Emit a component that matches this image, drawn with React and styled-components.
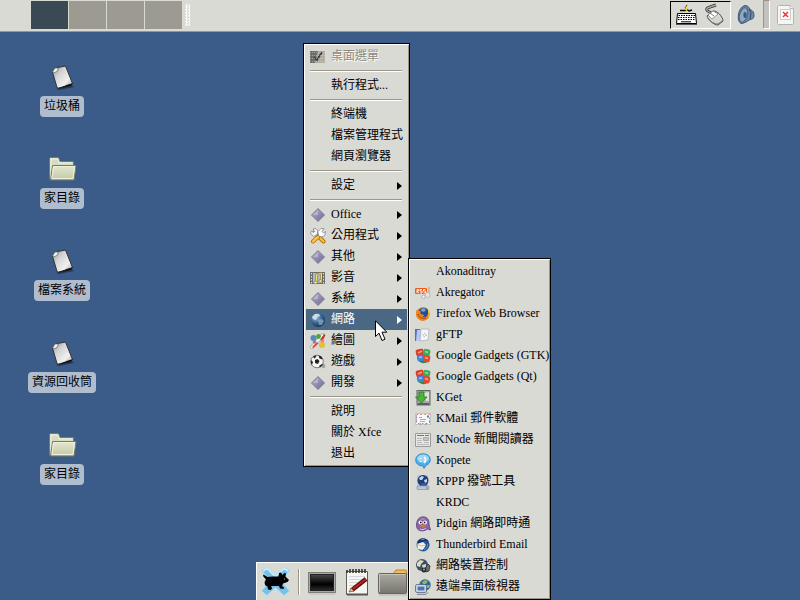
import React from "react";
import styled, { createGlobalStyle } from "styled-components";

const GlobalStyle = createGlobalStyle`
  * {
    box-sizing: border-box;
  }

  body {
    margin: 0;
    font-family: "Liberation Serif", "Noto Sans CJK TC", serif;
    font-size: 12px;
    color: #000000;
  }

  button {
    border: none;
    margin: 0;
    padding: 0;
    background: none;
    font: inherit;
    color: inherit;
  }

  ul {
    list-style: none;
    margin: 0;
    padding: 0;
  }
`;

/* Gradients used by more than one icon */

const Gradients = () => (
  <HiddenSvg width="0" height="0" aria-hidden="true">
    <defs>
      <linearGradient id="paper" x1="0" y1="0" x2="1" y2="1">
        <stop offset="0" stopColor="#8c8c8c" />
        <stop offset="0.35" stopColor="#d4d4d4" />
        <stop offset="0.7" stopColor="#f0f0f0" />
        <stop offset="1" stopColor="#a0a0a0" />
      </linearGradient>
      <linearGradient id="folder" x1="0" y1="0" x2="0" y2="1">
        <stop offset="0" stopColor="#e4e8d2" />
        <stop offset="1" stopColor="#c3c9a4" />
      </linearGradient>
      <linearGradient id="diamond" x1="0" y1="0" x2="1" y2="1">
        <stop offset="0" stopColor="#b9b4cc" />
        <stop offset="1" stopColor="#6b6690" />
      </linearGradient>
      <linearGradient id="screen" x1="0" y1="0" x2="0" y2="1">
        <stop offset="0" stopColor="#4a4a4a" />
        <stop offset="0.6" stopColor="#000000" />
        <stop offset="1" stopColor="#2c2c2c" />
      </linearGradient>
      <linearGradient id="greyFolder" x1="0" y1="0" x2="0" y2="1">
        <stop offset="0" stopColor="#aaa9a2" />
        <stop offset="1" stopColor="#77756e" />
      </linearGradient>
      <radialGradient id="globe" cx="0.35" cy="0.3" r="0.8">
        <stop offset="0" stopColor="#a9c8e2" />
        <stop offset="0.5" stopColor="#386794" />
        <stop offset="1" stopColor="#122848" />
      </radialGradient>
    </defs>
  </HiddenSvg>
);

/* Desktop icons */

const PaperIcon = () => (
  <svg width="32" height="32" viewBox="0 0 32 32">
    <path d="M10 29l16-4 2 2-15 3z" fill="#1c2b40" opacity="0.7" />
    <path
      d="M6.500 12l2.500-4 10.500-2 7 17.500-2 1.500-12 3-1.500-.5z"
      fill="url(#paper)"
      stroke="#333333"
    />
    <path d="M6.500 12l2.500-4 3.500 0-1.500 3.500-2.500 1z" fill="#f4f4f4" stroke="#666666" strokeWidth="0.7" />
    <path d="M11 29l14-3 2-3-5 1.500z" fill="#151515" />
  </svg>
);

const FolderIcon = () => (
  <svg width="32" height="32" viewBox="0 0 32 32">
    <path
      d="M3.500 27V6.500l1-1h8l1.500 4h13.500v17z"
      fill="#d7dbbf"
      stroke="#777c62"
    />
    <path d="M5 25V7h7l1 4h13" fill="none" stroke="#f0f2e3" />
    <path
      d="M6.500 13.500h23.500l-2 14.500H4.500z"
      fill="url(#folder)"
      stroke="#777c62"
    />
    <path d="M7.500 14.500h21l-1.500 12H6z" fill="none" stroke="#edf0df" />
  </svg>
);

/* Menu icons */

const Glyph = ({ children }) => (
  <svg width="16" height="16" viewBox="0 0 16 16" aria-hidden="true">
    {children}
  </svg>
);

const DeskIcon = () => (
  <Glyph>
    <rect x="0" y="2" width="15" height="12" fill="#b0ada0" />
    <path d="M0 2h8l-3 12H0z" fill="#6a6d6e" />
    <path d="M4 8l3 3 5-8" stroke="#3c3e40" strokeWidth="1.800" fill="none" />
    <path
      d="M0 3.500h15M0 6.500h15M0 9.500h15M0 12.500h15"
      stroke="#dadad5"
      strokeDasharray="1 1"
      opacity="0.5"
    />
  </Glyph>
);

const DiamondIcon = () => (
  <Glyph>
    <path d="M8 1.500L14.500 8 8 14.500 1.500 8z" fill="url(#diamond)" stroke="#7f7b9a" />
    <path d="M8 3L3 8h5z" fill="#cbc7da" opacity="0.6" />
  </Glyph>
);

const ToolsIcon = () => (
  <Glyph>
    <path d="M4 4l9 9" stroke="#8a8a86" strokeWidth="3" strokeLinecap="round" />
    <path
      d="M0.500 5l1-2 2 1.500 1-1-1.500-2.500 3-.5 2 2.500-1 4-3.500 1.500z"
      fill="#f4f4f4"
      stroke="#777777"
      strokeWidth="0.7"
    />
    <path d="M9.500 9.500l4 4" stroke="#b06d06" strokeWidth="4" strokeLinecap="round" />
    <path d="M9.500 9.500l4 4" stroke="#f8be3c" strokeWidth="2.400" strokeLinecap="round" />
    <path d="M8 9L3 13.500" stroke="#b06d06" strokeWidth="4" strokeLinecap="round" />
    <path d="M8 9L3 13.500" stroke="#ffc440" strokeWidth="2.400" strokeLinecap="round" />
    <path
      d="M8.500 8l-.5-4.500 3-3h3l-2 3 1.500 1.500 2-1.500-.5 3.500-3 2z"
      fill="#ffffff"
      stroke="#777777"
      strokeWidth="0.7"
    />
  </Glyph>
);

const MediaIcon = () => (
  <Glyph>
    <rect x="0" y="2" width="15" height="12" fill="#6b7072" />
    <rect x="3" y="3" width="9" height="10" fill="#a9bdc6" />
    <path d="M1.500 3v11M13.500 3v11" stroke="#dcdcd8" strokeDasharray="1.500 1.500" />
    <path d="M6.500 12V4.500l5-1.500v8" fill="none" stroke="#80631c" strokeWidth="1.800" />
    <path d="M6.500 12V4.500l5-1.500v8" fill="none" stroke="#f9dc78" strokeWidth="1" />
    <ellipse cx="5.500" cy="12.500" rx="1.700" ry="1.500" fill="#f9dc78" stroke="#80631c" strokeWidth="0.5" />
    <ellipse cx="10.500" cy="11" rx="1.700" ry="1.500" fill="#f9dc78" stroke="#80631c" strokeWidth="0.5" />
  </Glyph>
);

const GlobeIcon = () => (
  <Glyph>
    <circle cx="8" cy="8" r="7" fill="url(#globe)" />
    <path d="M2 5l3-3 4 0 1 2-3 1-1 3-3-1z" fill="#d2e3ee" opacity="0.9" />
    <path d="M8 8l4-1 2 2-2 4-3 0z" fill="#9cbfd8" opacity="0.6" />
  </Glyph>
);

const PaintIcon = () => (
  <Glyph>
    <path d="M2 14L13 2" stroke="#a8adb0" strokeWidth="4" strokeLinecap="round" />
    <path d="M2 14L13 2" stroke="#eef1f2" strokeWidth="2.500" strokeLinecap="round" />
    <circle cx="3.500" cy="5" r="3" fill="#5a86bd" />
    <circle cx="8.500" cy="3.500" r="2.400" fill="#4aa63a" />
    <path d="M10 7l4-6 1.500 1-3 6z" fill="#cc2c23" />
    <circle cx="12" cy="12" r="3" fill="#e8bd38" />
    <circle cx="12.500" cy="8" r="1.800" fill="#e38a63" />
    <circle cx="4.500" cy="9" r="1.800" fill="#9d76ae" />
    <path d="M2 14l5-5 1.500 1.500-5 4.500z" fill="#db4a33" />
  </Glyph>
);

const BallIcon = () => (
  <Glyph>
    <path d="M10 9l4.500 1 1 3-3 1.500z" fill="#a0a09a" />
    <circle cx="7" cy="7.500" r="6.300" fill="#f5f5f5" stroke="#777777" />
    <path d="M5 6l2.500-1 2 2-1.500 3-3-1zM1 6l2 2-1 3-1-2zM8.500 1.500l3 1 1 3-3-1zM9 12l3-2 1 .500-3 3zM3 3l2-1.500 1.500 1-2 2z" fill="#222222" />
  </Glyph>
);

const RssIcon = () => (
  <Glyph>
    <rect x="0" y="3" width="12" height="6" rx="1" fill="#f05b16" />
    <path
      d="M2 8V4.500h1.500v1.500L2 6.500l2 1.500M7 4.500H5v1.500h2V8H5M10.500 4.500h-2v1.500h2V8h-2"
      stroke="#ffffff"
      strokeWidth="0.9"
      fill="none"
    />
    <path d="M14 2v5M14 7l-6 5" stroke="#f4a07a" strokeWidth="1.500" />
    <circle cx="12.500" cy="10" r="2.500" fill="#e5e5e5" stroke="#b9b9b9" />
    <circle cx="8.500" cy="12" r="1.800" fill="#efefef" stroke="#b5b5b5" />
  </Glyph>
);

const FirefoxIcon = () => (
  <Glyph>
    <circle cx="8" cy="8" r="6.800" fill="#e8741a" />
    <circle cx="8.500" cy="6.500" r="4.800" fill="#234f92" />
    <path d="M6 3l3-1 2 2-2 2-3-1z" fill="#6fa7d8" />
    <path
      d="M1.500 4l2 1 2 0 0 3 4 1-2 2 4 0 3-4c0 5-4 8-8 7.500C2 14 0 9 1.500 4z"
      fill="#ec8620"
    />
    <path d="M13 3c2 2 2 6 0 9 .5-3 .5-6 0-9z" fill="#f8cb3c" />
    <path d="M3 8c1 4 5 5 8 4" stroke="#a82e12" fill="none" />
  </Glyph>
);

const FtpIcon = () => (
  <Glyph>
    <path d="M0 2h5v12H0z" fill="#4e70bd" />
    <path d="M2 3h4v11H1z" fill="#b9c9ee" />
    <path d="M6 2h8l-1 11-8 1z" fill="#f5f5f8" stroke="#a7a7b4" strokeWidth="0.7" />
    <circle cx="9.500" cy="8" r="1.500" fill="none" stroke="#8b94b5" strokeDasharray="1 1" />
  </Glyph>
);

const GadgetsIcon = () => (
  <Glyph>
    <path d="M3 12c2 4 8 4 11 1l-1-4H4z" fill="#2f8c46" />
    <path d="M4 4h8v8H4z" fill="#8a5a4c" />
    <rect x="1" y="1" width="8" height="7" rx="2" fill="#dc3d2b" transform="rotate(-12 5 5)" />
    <rect x="8" y="1" width="7" height="7" rx="2" fill="#38ab55" transform="rotate(14 11 5)" />
    <rect x="2" y="7" width="7" height="6" rx="2" fill="#4385dc" transform="rotate(-8 5 10)" />
    <rect x="8" y="7" width="7" height="7" rx="2" fill="#e34731" transform="rotate(12 11 11)" />
    <path d="M3 5l4-2M10 3.500l3 1M4 9.500l3-.5M10 9.500l3 1" stroke="#ffffff" strokeWidth="1.400" opacity="0.5" />
  </Glyph>
);

const KGetIcon = () => (
  <Glyph>
    <rect x="2" y="0.5" width="13" height="14.500" fill="#a6aaa8" stroke="#646866" />
    <path d="M8 3l6-1v9h-3z" fill="#dddfdd" />
    <rect x="3" y="13" width="11" height="2" fill="#5c605e" />
    <path d="M4 2h5v5h3l-5.500 6L.5 7H4z" fill="#4bb536" stroke="#257c1b" strokeWidth="0.8" />
  </Glyph>
);

const MailIcon = () => (
  <Glyph>
    <rect x="0.5" y="2.500" width="15" height="11" fill="#f6f6f4" stroke="#c4c4c4" />
    <rect
      x="1.500"
      y="3.500"
      width="13"
      height="9"
      fill="none"
      stroke="#e07a70"
      strokeDasharray="1.500 2.500"
    />
    <path d="M12 4.500h2v2h-2z" fill="#587bbf" />
    <path d="M4 6.500h3M5 8.500h6M5 10.500h5" stroke="#999999" strokeWidth="0.8" />
    <path d="M1 5h1M1 9h1M14 10h1M5 13h1M10 13h1" stroke="#4267a5" />
  </Glyph>
);

const NewsIcon = () => (
  <Glyph>
    <path d="M.5 1.500h15v13H.5z" fill="#e7e7e5" stroke="#9b9b9b" />
    <path d="M2 3.500h7M10 3.500h4" stroke="#777777" />
    <path d="M2 6.500h5M2 8.500h5M2 10.500h5M2 12.500h12M9 10.500h5" stroke="#bbbbbb" />
    <path d="M8.500 5.500h5v3h-5z" fill="#c7c7c7" stroke="#aaaaaa" />
  </Glyph>
);

const KopeteIcon = () => (
  <Glyph>
    <path
      d="M8 .8c4.500 0 7.300 2.500 7.300 6 0 2.500-1.500 4.500-4 5.400L9 15.500 8 13C3.500 13 .7 10.500.7 7S3.500.8 8 .8z"
      fill="#4baee8"
      stroke="#2880c3"
      strokeWidth="0.8"
    />
    <ellipse cx="8" cy="5.500" rx="6" ry="4" fill="#9bd8f7" />
    <path d="M5.500 5v1M5.500 8v1M9 4c2 1 2 4 0 6" stroke="#ffffff" strokeWidth="1.600" fill="none" />
  </Glyph>
);

const PppIcon = () => (
  <Glyph>
    <path d="M2 1h11v11H2z" fill="#bcc8d8" />
    <circle cx="8" cy="6.500" r="5.500" fill="#213e79" />
    <path d="M4 4l3-2 2 1-2 3-2 0zM9 6l3-1 0 3-2 1z" fill="#c6d8ea" />
    <path d="M7 9h3l3 4H4z" fill="#35588f" />
    <rect x="2" y="12" width="12" height="3.500" rx="1" fill="#b8c5d7" stroke="#7890af" strokeWidth="0.7" />
    <path d="M11 14h2" stroke="#d85560" />
  </Glyph>
);

const PidginIcon = () => (
  <Glyph>
    <path
      d="M8 .8c4 0 6 2.800 6 6 0 3 1 5 1.500 7.200l-3-1c-3 2.500-8 2.500-10 0C.5 10.500 1 .8 8 .8z"
      fill="#8a64a6"
      stroke="#51346d"
      strokeWidth="0.7"
    />
    <path d="M4 3l4-1 3 1-3 1z" fill="#ae8bc4" />
    <circle cx="5.500" cy="6.500" r="2" fill="#ffffff" />
    <circle cx="10" cy="6.500" r="2" fill="#ffffff" />
    <circle cx="5.800" cy="6.500" r="0.9" fill="#222222" />
    <circle cx="9.700" cy="6.500" r="0.9" fill="#222222" />
    <path d="M5 10l3-1.500 3 1.500-3 2z" fill="#d9762f" />
    <path d="M5 13c2 1 4 1 6-1" stroke="#dccbe8" fill="none" />
  </Glyph>
);

const ThunderbirdIcon = () => (
  <Glyph>
    <circle cx="8" cy="8" r="6.500" fill="#2566ac" />
    <path d="M2 6c1-6 10-6 12-1l-3-1-4 1-3 2z" fill="#16366e" />
    <path d="M2 7l6-2 3 3-3 5-5-1z" fill="#f4f1e4" />
    <path d="M2 7l4 2 5-1" stroke="#aaa79b" fill="none" strokeWidth="0.7" />
    <path d="M8 13l3-3 1-5 2 3-2 4-3 2z" stroke="#143467" fill="#4d95d1" strokeWidth="0.7" />
    <path d="M5 3l3-1 2 1z" fill="#75b1e2" />
    <path d="M1 8l2-1 0 2z" fill="#dfa332" />
  </Glyph>
);

const NetControlIcon = () => (
  <Glyph>
    <circle cx="7" cy="7" r="6" fill="#38506e" />
    <path d="M2 5l3-3 4 1-3 3-1 3-3-1zM7 7l4-1 0 3-3 2z" fill="#e5dbb2" />
    <path d="M9 12l4-6 2 2-1 5-3 1z" fill="#696d70" stroke="#2d3133" strokeWidth="0.8" />
    <circle cx="9" cy="12" r="2.500" fill="#282d30" />
    <circle cx="9" cy="11.500" r="1" fill="#a0a4a5" />
  </Glyph>
);

const RemoteIcon = () => (
  <Glyph>
    <circle cx="10" cy="6" r="5.700" fill="#2d63a4" />
    <path d="M7 3l3-2 3 1-2 3-3 0zM11 6l4 0-1 3-3 0z" fill="#8bb764" />
    <rect x="0.7" y="5.700" width="10.600" height="7.600" rx="1" fill="#e9edf2" stroke="#56657a" />
    <rect x="2.500" y="7.500" width="7" height="4" fill="#4476b6" />
    <path d="M2 15.300h9l2-2" stroke="#758193" fill="none" />
  </Glyph>
);

/* Panel and dock icons */

const KeyboardIcon = () => (
  <svg width="24" height="24" viewBox="0 0 24 24">
    <path d="M6 7.500h5l2-1 2 1.500 3-1" stroke="#000000" strokeWidth="1.500" fill="none" />
    <path d="M13 2l-2 3 2 2" stroke="#333333" fill="none" />
    <path d="M12 3l2 2-1 3-2-1z" fill="#f1dc28" />
    <path d="M3.500 10.500h18l1 10h-20z" fill="#ffffff" stroke="#000000" />
    <path d="M4.500 12.500h17M4 14.500h17M4 16.500h17" stroke="#000000" strokeWidth="1.200" strokeDasharray="1.500 1" />
    <path d="M7 18.800h10" stroke="#000000" />
    <path d="M2 21.500h21" stroke="#555555" />
  </svg>
);

const MouseIcon = () => (
  <svg width="24" height="24" viewBox="0 0 24 24">
    <path d="M8 10C2 7 3 5 7 4l6-2" stroke="#333333" strokeWidth="3" fill="none" />
    <path d="M8 10C2 7 3 5 7 4l6-2" stroke="#aaaaaa" strokeWidth="1.400" fill="none" />
    <path
      d="M4 13l6-5c4-1 10 6 10 10l-5 4c-4 0-10-5-11-9z"
      fill="#d6d6d3"
      stroke="#4d4d4d"
    />
    <path d="M5 12l5-4 5 3-6 5z" fill="#ffffff" stroke="#777777" strokeWidth="0.7" />
    <path d="M7 10l4 3M5 15c2 4 7 6 10 6l4-3" stroke="#777777" fill="none" />
  </svg>
);

const SpeakerIcon = () => (
  <svg width="20" height="24" viewBox="0 0 20 24">
    <path
      d="M8 2.500c3 0 4 2 5 4 3 1 4 3 4 6s-2 4-4 4c-3 2-6 4-9 4C-1 18 1 4 8 2.500z"
      fill="#6b88aa"
      stroke="#3e5876"
    />
    <ellipse cx="6.500" cy="12" rx="3.800" ry="7.500" fill="#8fa9c5" stroke="#4a6685" transform="rotate(16 6.500 12)" />
    <ellipse cx="8" cy="12" rx="1.600" ry="3" fill="#3c597a" />
    <path d="M12 6l2 4-1 6" stroke="#314c6c" fill="none" />
  </svg>
);

const BrokenDocIcon = () => (
  <svg width="20" height="22" viewBox="0 0 20 22">
    <path d="M1.500 2.500l1-1h12l3 3v15l-1 1h-14l-1-1z" fill="#f5f5f3" stroke="#b3b3b0" />
    <path d="M14 1.500v3h3.500" fill="#ffffff" stroke="#bbbbbb" />
    <rect x="4.500" y="5.500" width="10" height="10" fill="#ffffff" stroke="#cccccc" />
    <path d="M7 8l5 5M12 8l-5 5" stroke="#ec3434" strokeWidth="1.500" />
  </svg>
);

const XfceIcon = () => (
  <svg width="32" height="32" viewBox="0 0 32 32">
    <path
      d="M2.500 4.500L8 1l8.500 8.500L25 1l5.500 3.500L22 15l8.500 10L25 29.500l-8.500-8-8.500 8L2.500 25 11 15z"
      fill="#74c2e8"
      stroke="#b4dcee"
    />
    <path d="M4 5l4-2.500 8.500 8.500L25 2.500 29 5" fill="none" stroke="#d2effb" strokeWidth="1.500" />
    <path
      d="M4.500 8.500L4 10l3 3.500c-1.500 1.500-2 4-.5 6l2 1 .5 3 3 .5 1-2-1-2 8 0 1 2.500 3.500.5.5-1.500-2-1.500 1-2.500 4.500-1.500 1.500-2-3.500-3.500.5-3-1.500-.500-2 2-1.500-2.500-2 .500-.500 3.500c-4 0-8-.500-11 .500z"
      fill="#000000"
    />
    <path d="M25 13h1" stroke="#aaaaaa" />
  </svg>
);

const TerminalIcon = () => (
  <svg width="30" height="30" viewBox="0 0 30 30">
    <rect x="1.500" y="5.500" width="27" height="20" fill="#aaaaa5" stroke="#7d7d79" />
    <rect x="3.500" y="7.500" width="23" height="16" fill="url(#screen)" stroke="#222222" />
    <path d="M2 27h26" stroke="#bcbcb7" />
  </svg>
);

const NotepadIcon = () => (
  <svg width="26" height="30" viewBox="0 0 26 30">
    <path d="M2.500 4.500h21v23h-21z" fill="#f6f6f1" stroke="#5c5c58" />
    <path d="M3 27.500h21" stroke="#555555" strokeWidth="2" />
    <path d="M3 3v3M6 2v4M9 2v4M12 2v4M15 2v4M18 2v4M21 2v4" stroke="#333333" strokeWidth="1.600" />
    <path d="M5 9.500h16M5 12.500h16M5 15.500h15M5 18.500h13M5 21.500h6" stroke="#d4d6da" />
    <path d="M8 23l14-11" stroke="#550909" strokeWidth="4.400" />
    <path d="M9 22l13-10" stroke="#b82626" strokeWidth="2.200" />
    <path d="M5 25l2-4 3 3z" fill="#e7bb84" stroke="#444444" strokeWidth="0.6" />
  </svg>
);

const GreyFolderIcon = () => (
  <svg width="32" height="30" viewBox="0 0 32 30">
    <path d="M16 7l3-4h10l1 5z" fill="#eebc61" stroke="#b98227" />
    <rect x="1.500" y="6.500" width="28" height="20" rx="1" fill="url(#greyFolder)" stroke="#66645e" />
    <path d="M2.500 25V7.500H28" fill="none" stroke="#c5c4bc" />
    <path d="M2 28h28" stroke="#b2b1aa" />
  </svg>
);

const Pointer = () => (
  <svg width="14" height="22" viewBox="0 0 14 22">
    <path
      d="M.5 .8V16.500l3.500-3.300 3 7.300 3-1.300-3-7h4.800z"
      fill="#ffffff"
      stroke="#000000"
    />
  </svg>
);

/* Content */

const desktopItems = [
  { label: "垃圾桶", icon: PaperIcon },
  { label: "家目錄", icon: FolderIcon },
  { label: "檔案系統", icon: PaperIcon },
  { label: "資源回收筒", icon: PaperIcon },
  { label: "家目錄", icon: FolderIcon },
];

const menuGroups = [
  [{ label: "桌面選單", icon: DeskIcon, disabled: true }],
  [{ label: "執行程式..." }],
  [{ label: "終端機" }, { label: "檔案管理程式" }, { label: "網頁瀏覽器" }],
  [{ label: "設定", more: true }],
  [
    { label: "Office", icon: DiamondIcon, more: true },
    { label: "公用程式", icon: ToolsIcon, more: true },
    { label: "其他", icon: DiamondIcon, more: true },
    { label: "影音", icon: MediaIcon, more: true },
    { label: "系統", icon: DiamondIcon, more: true },
    { label: "網路", icon: GlobeIcon, more: true, active: true },
    { label: "繪圖", icon: PaintIcon, more: true },
    { label: "遊戲", icon: BallIcon, more: true },
    { label: "開發", icon: DiamondIcon, more: true },
  ],
  [{ label: "說明" }, { label: "關於 Xfce" }, { label: "退出" }],
];

const networkItems = [
  { label: "Akonaditray" },
  { label: "Akregator", icon: RssIcon },
  { label: "Firefox Web Browser", icon: FirefoxIcon },
  { label: "gFTP", icon: FtpIcon },
  { label: "Google Gadgets (GTK)", icon: GadgetsIcon },
  { label: "Google Gadgets (Qt)", icon: GadgetsIcon },
  { label: "KGet", icon: KGetIcon },
  { label: "KMail 郵件軟體", icon: MailIcon },
  { label: "KNode 新聞閱讀器", icon: NewsIcon },
  { label: "Kopete", icon: KopeteIcon },
  { label: "KPPP 撥號工具", icon: PppIcon },
  { label: "KRDC" },
  { label: "Pidgin 網路即時通", icon: PidginIcon },
  { label: "Thunderbird Email", icon: ThunderbirdIcon },
  { label: "網路裝置控制", icon: NetControlIcon },
  { label: "遠端桌面檢視器", icon: RemoteIcon },
];

function MenuItem({ label, icon: Icon, more, active, disabled }) {
  return (
    <li>
      <MenuButton type="button" $active={active} disabled={disabled}>
        <IconSlot>{Icon && <Icon />}</IconSlot>
        <MenuText>{label}</MenuText>
        {more && <Arrow />}
      </MenuButton>
    </li>
  );
}

export default function App() {
  return (
    <Screen>
      <GlobalStyle />
      <Gradients />
      <Panel>
        <Pager>
          {[1, 2, 3, 4].map((n) => (
            <Workspace
              key={n}
              type="button"
              $current={n === 1}
              aria-label={`工作區 ${n}`}
            />
          ))}
        </Pager>
        <Handle />
        <Tray>
          <TrayFrame>
            <PanelButton type="button" aria-label="鍵盤">
              <KeyboardIcon />
            </PanelButton>
            <PanelButton type="button" aria-label="滑鼠">
              <MouseIcon />
            </PanelButton>
          </TrayFrame>
          <PanelButton type="button" aria-label="音量">
            <SpeakerIcon />
          </PanelButton>
          <VolumeBar />
          <PanelButton type="button" aria-label="文件">
            <BrokenDocIcon />
          </PanelButton>
        </Tray>
      </Panel>

      <Desktop>
        {desktopItems.map(({ label, icon: Icon }, i) => (
          <Shortcut key={i} type="button">
            <Icon />
            <ShortcutLabel>{label}</ShortcutLabel>
          </Shortcut>
        ))}
      </Desktop>

      <Dock>
        <PanelButton type="button" aria-label="Xfce">
          <XfceIcon />
        </PanelButton>
        <DockDivider />
        <PanelButton type="button" aria-label="終端機">
          <TerminalIcon />
        </PanelButton>
        <PanelButton type="button" aria-label="編輯器">
          <NotepadIcon />
        </PanelButton>
        <PanelButton type="button" aria-label="檔案管理程式">
          <GreyFolderIcon />
        </PanelButton>
      </Dock>

      <DesktopMenu>
        {menuGroups.map((group, i) => (
          <MenuGroup key={i}>
            {group.map((item) => (
              <MenuItem key={item.label} {...item} />
            ))}
          </MenuGroup>
        ))}
      </DesktopMenu>

      <SubMenu>
        <ul>
          {networkItems.map((item) => (
            <MenuItem key={item.label} {...item} />
          ))}
        </ul>
      </SubMenu>

      <PointerSpot>
        <Pointer />
      </PointerSpot>
    </Screen>
  );
}

const HiddenSvg = styled.svg`
  position: absolute;
`;

const Screen = styled.div`
  position: relative;
  display: flex;
  flex-direction: column;
  min-height: 100vh;
  overflow: hidden;
  background: #3b5b88;
`;

const Panel = styled.header`
  display: flex;
  align-items: center;
  height: 32px;
  padding: 0 4px 2px 31px;
  background: #dadad5;
  border-bottom: 1px solid #9c958a;
`;

const Pager = styled.div`
  display: flex;
  gap: 1px;
`;

const Workspace = styled.button`
  width: 37px;
  height: 28px;
  background: ${({ $current }) => ($current ? "#394a55" : "#9d9a92")};
`;

const Handle = styled.div`
  width: 5px;
  height: 22px;
  margin-left: 3px;
  background: repeating-conic-gradient(#ffffff 0 25%, transparent 0 50%) 0 0 / 3px 3px;
  opacity: 0.8;
`;

const Tray = styled.div`
  display: flex;
  align-items: center;
  gap: 6px;
  margin-left: auto;
`;

const TrayFrame = styled.div`
  display: flex;
  align-items: center;
  gap: 5px;
  height: 28px;
  padding: 0 3px;
  border: 1px solid;
  border-color: #000000 #ffffff #ffffff #000000;
`;

const PanelButton = styled.button`
  display: flex;
`;

const VolumeBar = styled.div`
  width: 7px;
  height: 29px;
  background: #c3c1bb;
  border: 1px solid;
  border-color: #9c958a #ffffff #ffffff #9c958a;
`;

const Desktop = styled.main`
  display: flex;
  flex-direction: column;
  align-items: center;
  gap: 35px;
  width: 124px;
  padding-top: 28px;
`;

const Shortcut = styled.button`
  display: flex;
  flex-direction: column;
  align-items: center;
  gap: 4px;
`;

const ShortcutLabel = styled.span`
  padding: 0 4px;
  line-height: 21px;
  white-space: nowrap;
  background: #b0bdcf;
  border-radius: 4px;
`;

const Dock = styled.footer`
  display: flex;
  align-items: center;
  align-self: center;
  gap: 7px;
  width: 288px;
  height: 38px;
  margin-top: auto;
  padding: 0 2px;
  background: #dadad5;
  border: 1px solid #ffffff;
  border-bottom: none;
`;

const DockDivider = styled.div`
  width: 2px;
  height: 26px;
  background: #ffffff;
  border-left: 1px solid #9c958a;
`;

const Menu = styled.nav`
  position: absolute;
  padding: 2px;
  background: #dadad5;
  border: 1px solid #000000;
  box-shadow: inset 1px 1px #ffffff, inset -1px -1px #9c958a;
`;

const DesktopMenu = styled(Menu)`
  top: 43px;
  left: 303px;
  width: 107px;
`;

const SubMenu = styled(Menu)`
  top: 258px;
  left: 408px;
  width: 143px;
`;

const MenuGroup = styled.ul`
  & + &::before {
    content: "";
    display: block;
    height: 1px;
    margin: 3px 5px 3px 4px;
    background: #ffffff;
    border-top: 1px solid #9c958a;
  }
`;

const MenuButton = styled.button`
  display: flex;
  align-items: center;
  gap: 5px;
  width: 100%;
  height: 21px;
  padding: 0 5px 0 4px;
  text-align: left;
  white-space: nowrap;
  color: ${({ $active }) => ($active ? "#ffffff" : "#000000")};
  background: ${({ $active }) => ($active ? "#4a6784" : "transparent")};

  &:disabled {
    color: #8d8a84;
    text-shadow: 1px 1px #ffffff;
  }
`;

const IconSlot = styled.span`
  display: flex;
  flex: none;
  width: 16px;
  height: 16px;
`;

const MenuText = styled.span`
  flex: 1;
  min-width: 0;
  line-height: 21px;
`;

const Arrow = styled.span`
  border: 4px solid transparent;
  border-left: 5px solid currentColor;
  border-right: none;
`;

const PointerSpot = styled.div`
  position: absolute;
  top: 320px;
  left: 375px;
  pointer-events: none;
`;
